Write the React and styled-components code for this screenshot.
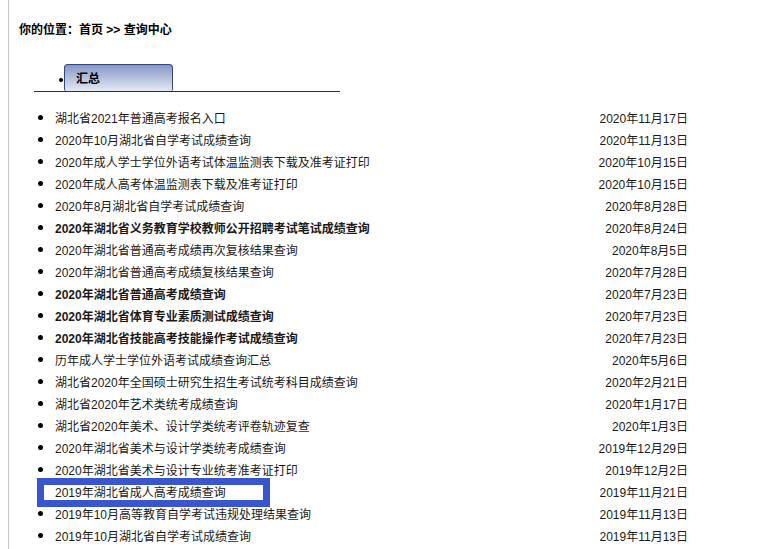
import React from 'react';
import styled, { createGlobalStyle } from 'styled-components';

const GlobalStyle = createGlobalStyle`
  html, body {
    margin: 0;
    padding: 0;
    background: #fff;
  }
  body {
    font-family: "Liberation Sans", Arial, "Noto Sans CJK SC", sans-serif;
    font-size: 12px;
    color: #1a1a1a;
  }
`;

const Page = styled.div`
  margin-left: 8px;
  border-left: 1px solid #c4c4c4;
  min-height: 100vh;
  padding-top: 22px;
  box-sizing: border-box;
`;

const Breadcrumb = styled.div`
  padding-left: 10px;
  font-weight: bold;
  line-height: 16px;
  color: #000;
`;

const TabBar = styled.div`
  display: flex;
  align-items: flex-end;
  margin: 26px 0 0 25px;
  width: 281px;
  height: 27px;
  border-bottom: 1px solid #1f2d6b;
  padding-left: 25px;
  box-sizing: content-box;
`;

const Dot = styled.span`
  width: 4px;
  height: 4px;
  border-radius: 50%;
  background: #000;
  margin: 0 1px 9px 0;
`;

const Tab = styled.div`
  width: 96px;
  height: 26px;
  border: 1px solid #34457f;
  border-bottom: none;
  border-radius: 4px 4px 2px 2px;
  background: linear-gradient(#8797c6, #e4e9f4);
  padding-left: 11px;
  font-weight: bold;
  line-height: 29px;
  color: #000;
`;

const List = styled.ul`
  list-style: none;
  margin: 14px 0 0 0;
  padding: 0 0 0 28px;
  width: 651px;
`;

const Row = styled.li`
  position: relative;
  display: flex;
  align-items: center;
  height: 22px;
  padding-left: 18px;

  &::before {
    content: '';
    position: absolute;
    left: 1px;
    top: 9px;
    width: 5px;
    height: 5px;
    border-radius: 50%;
    background: ${p => (p.$marked ? 'transparent' : '#000')};
  }

  &::after {
    content: '';
    display: ${p => (p.$marked ? 'block' : 'none')};
    position: absolute;
    left: 0;
    top: -2px;
    width: 219px;
    height: 15px;
    border: 7px solid #3a56cf;
  }
`;

const Title = styled.span`
  flex: 1;
  font-weight: ${p => (p.$bold ? 'bold' : 'normal')};
  white-space: nowrap;
`;

const DateText = styled.span`
  white-space: nowrap;
`;

const items = [
  ['湖北省2021年普通高考报名入口', '2020年11月17日'],
  ['2020年10月湖北省自学考试成绩查询', '2020年11月13日'],
  ['2020年成人学士学位外语考试体温监测表下载及准考证打印', '2020年10月15日'],
  ['2020年成人高考体温监测表下载及准考证打印', '2020年10月15日'],
  ['2020年8月湖北省自学考试成绩查询', '2020年8月28日'],
  ['2020年湖北省义务教育学校教师公开招聘考试笔试成绩查询', '2020年8月24日', true],
  ['2020年湖北省普通高考成绩再次复核结果查询', '2020年8月5日'],
  ['2020年湖北省普通高考成绩复核结果查询', '2020年7月28日'],
  ['2020年湖北省普通高考成绩查询', '2020年7月23日', true],
  ['2020年湖北省体育专业素质测试成绩查询', '2020年7月23日', true],
  ['2020年湖北省技能高考技能操作考试成绩查询', '2020年7月23日', true],
  ['历年成人学士学位外语考试成绩查询汇总', '2020年5月6日'],
  ['湖北省2020年全国硕士研究生招生考试统考科目成绩查询', '2020年2月21日'],
  ['湖北省2020年艺术类统考成绩查询', '2020年1月17日'],
  ['湖北省2020年美术、设计学类统考评卷轨迹复查', '2020年1月3日'],
  ['2020年湖北省美术与设计学类统考成绩查询', '2019年12月29日'],
  ['2020年湖北省美术与设计专业统考准考证打印', '2019年12月2日'],
  ['2019年湖北省成人高考成绩查询', '2019年11月21日', false, true],
  ['2019年10月高等教育自学考试违规处理结果查询', '2019年11月13日'],
  ['2019年10月湖北省自学考试成绩查询', '2019年11月13日'],
];

export default function App() {
  return (
    <>
      <GlobalStyle />
      <Page>
        <Breadcrumb>你的位置：首页 &gt;&gt; 查询中心</Breadcrumb>
        <TabBar>
          <Dot />
          <Tab>汇总</Tab>
        </TabBar>
        <List>
          {items.map(([title, date, bold, marked], i) => (
            <Row key={i} $marked={marked}>
              <Title $bold={bold}>{title}</Title>
              <DateText>{date}</DateText>
            </Row>
          ))}
        </List>
      </Page>
    </>
  );
}
